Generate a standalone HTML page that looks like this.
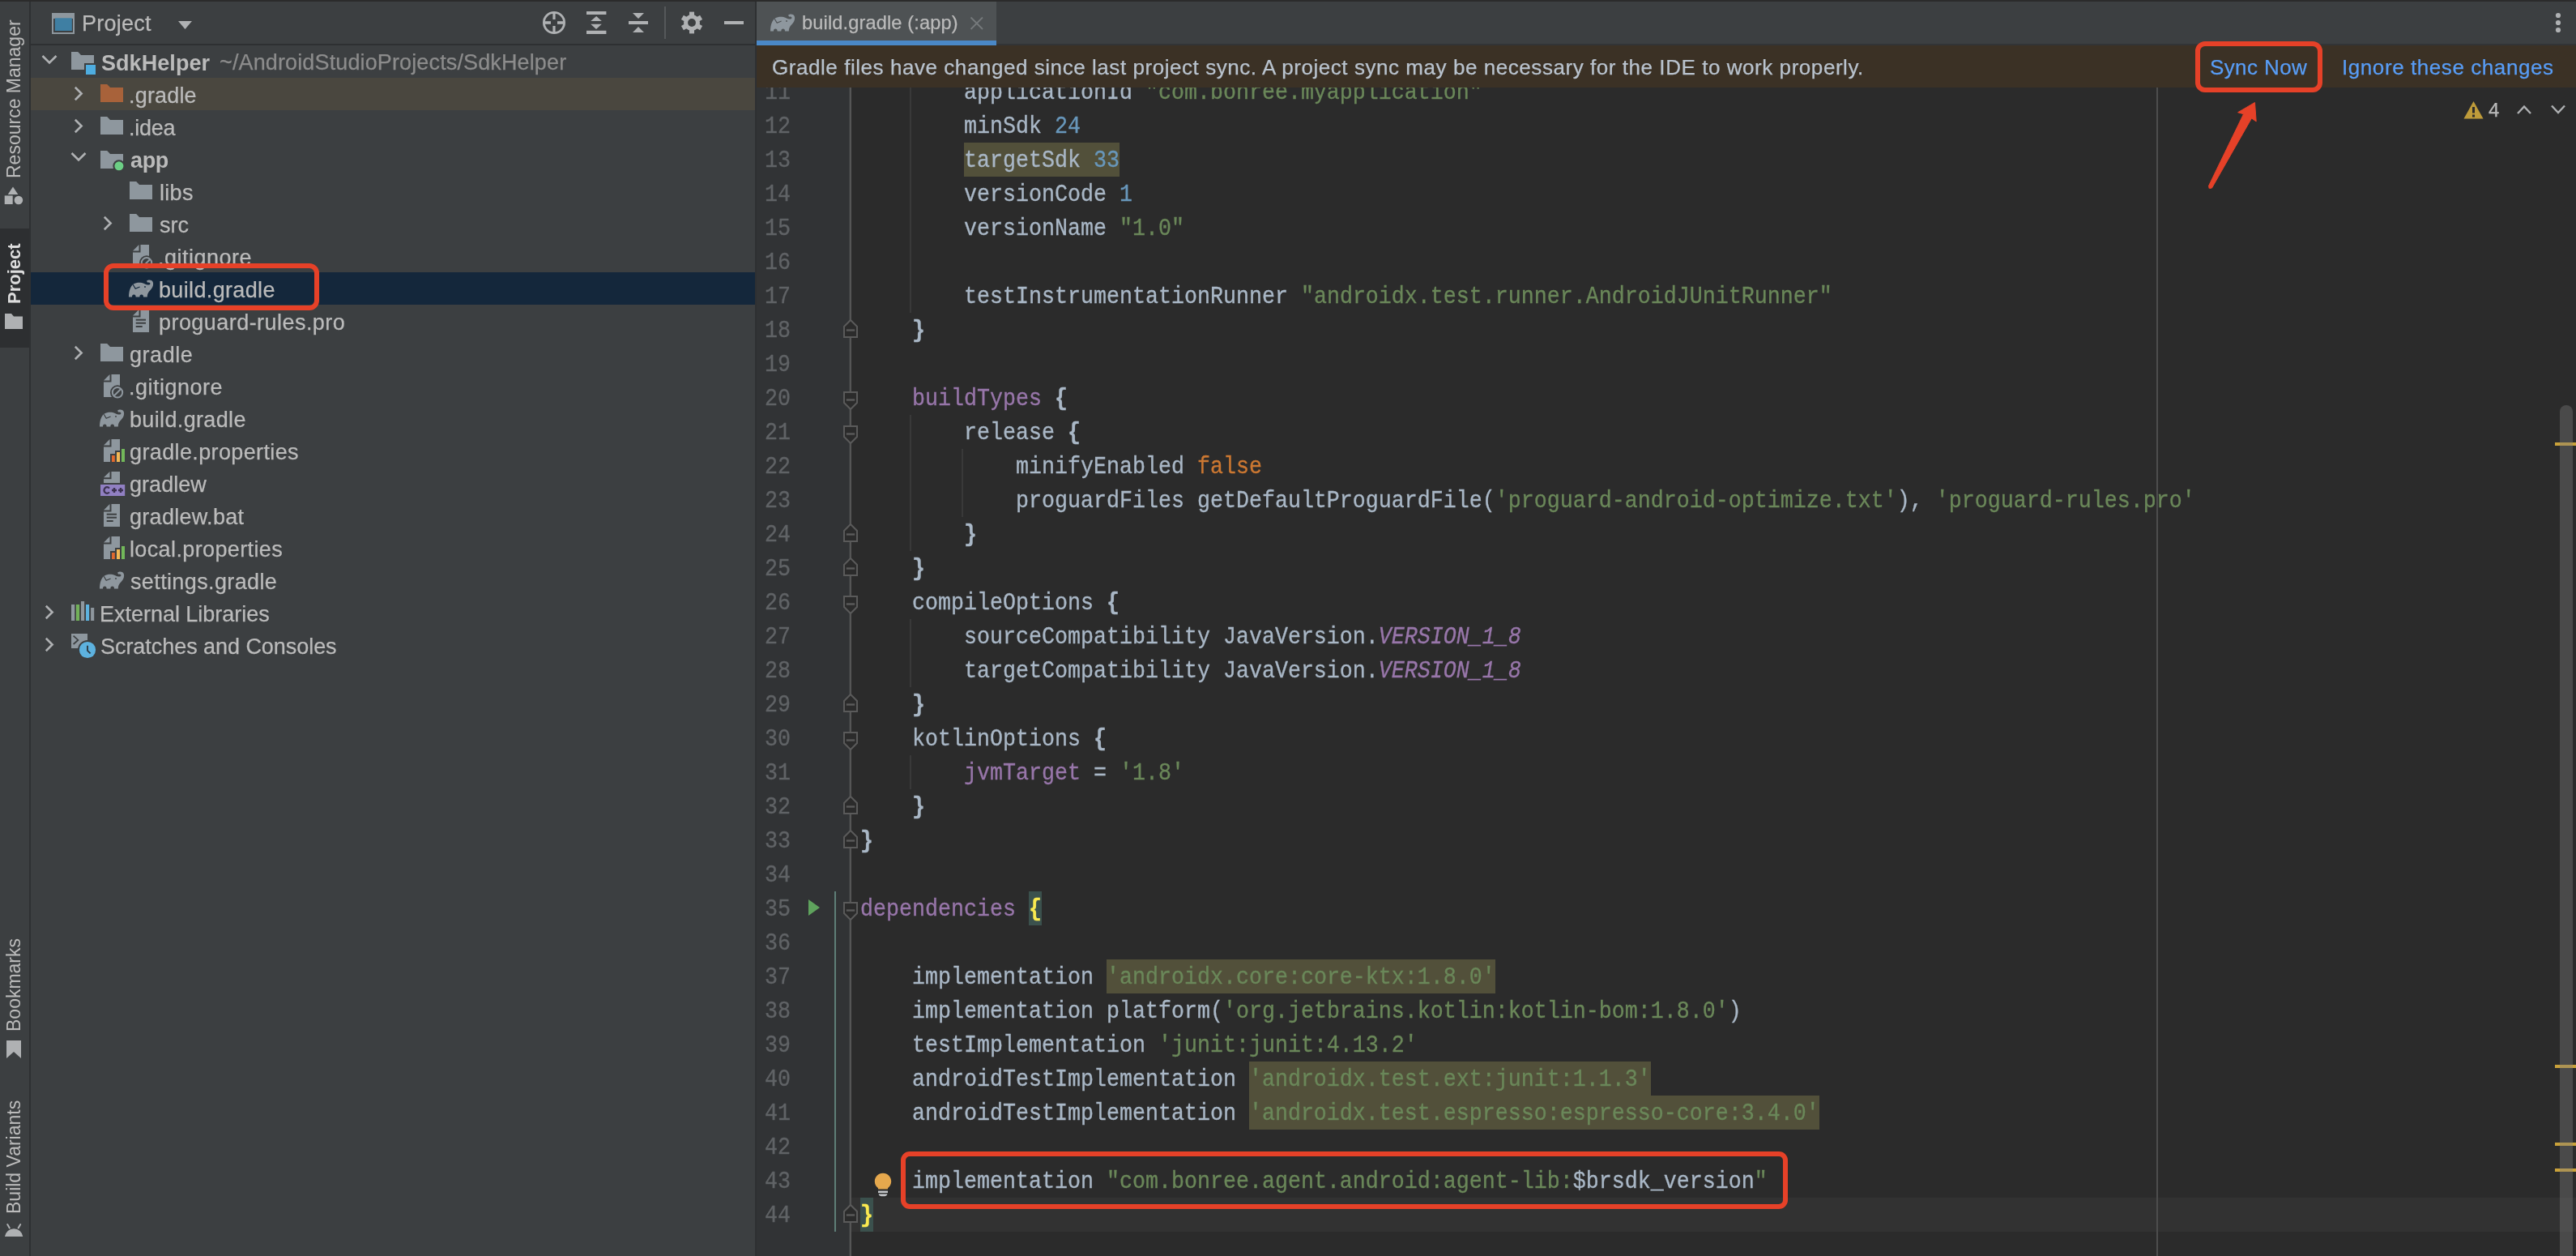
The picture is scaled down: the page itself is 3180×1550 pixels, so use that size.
<!DOCTYPE html>
<html><head><meta charset="utf-8">
<style>
*{margin:0;padding:0;box-sizing:border-box}
html,body{width:3180px;height:1550px;overflow:hidden;background:#3C3F41;font-family:"Liberation Sans",sans-serif}
.a{position:absolute}
.vt{position:absolute;transform-origin:0 0;transform:rotate(-90deg);white-space:nowrap;line-height:23px;height:23px;will-change:transform}
.tt{position:absolute;white-space:nowrap;font-size:27px;color:#BBBBBB;letter-spacing:0.4px;line-height:40px;will-change:transform;-webkit-text-stroke:0.25px}
.g{will-change:transform;-webkit-text-stroke:0.25px}
#gutter{left:934px;top:108px;width:114px;height:1442px;background:#313335;overflow:hidden}
#editor{left:1049px;top:108px;width:2131px;height:1442px;background:#2B2B2B;overflow:hidden}
.ln{position:absolute;left:0;width:42px;text-align:right;font-family:"Liberation Mono",monospace;font-size:26.67px;color:#606366;line-height:42px;height:42px;transform-origin:0 28px;transform:translateY(2.2px) scaleY(1.10);will-change:transform;-webkit-text-stroke:0.3px}
.cl{position:absolute;left:13px;white-space:pre;font-family:"Liberation Mono",monospace;font-size:26.67px;color:#A9B7C6;line-height:42px;height:42px;transform-origin:0 28px;transform:translateY(2.2px) scaleY(1.10);-webkit-text-stroke:0.3px;will-change:transform}
.k{color:#CC7832}.s{color:#6A8759}.n{color:#6897BB}.p{color:#9876AA}.i{font-style:italic}
.bm{color:#FAEA50;font-weight:bold}
.cl b{font-weight:bold}
</style></head><body>
<div class="a" style="left:0;top:0;width:3180px;height:2px;background:#2B2B2B"></div>
<div class="a" style="left:36px;top:2px;width:2px;height:1548px;background:#2E3032"></div>
<div class="a" style="left:38px;top:54px;width:894px;height:2px;background:#2E3032"></div>
<div class="a" style="left:932px;top:2px;width:2px;height:1548px;background:#2E3032"></div>
<div class="a" style="left:0;top:282px;width:36px;height:147px;background:#2D2F31"></div>
<div class="vt" style="left:6px;top:220px;color:#BBBBBB;font-weight:normal;font-size:23px">Resource Manager</div>
<div class="vt" style="left:6px;top:375px;color:#DDDDDD;font-weight:bold;font-size:22px">Project</div>
<div class="vt" style="left:6px;top:1273px;color:#BBBBBB;font-weight:normal;font-size:23px">Bookmarks</div>
<div class="vt" style="left:6px;top:1498px;color:#BBBBBB;font-weight:normal;font-size:23px">Build Variants</div>
<svg class="a" style="left:4px;top:228px" width="26" height="26" viewBox="0 0 26 26"><path d="M13 2.5 L19.3 12 H6.7Z" fill="#AFB1B3" transform="translate(-1,0)"/><rect x="1.7" y="13.4" width="10" height="10.6" fill="#AFB1B3"/><circle cx="18.9" cy="19" r="5.3" fill="#AFB1B3"/></svg>
<svg class="a" style="left:6px;top:386px" width="23" height="21" viewBox="0 0 23 21"><path d="M0 1 H8 L11 4.5 H22 V20 H0Z" fill="#AFB1B3"/></svg>
<svg class="a" style="left:8px;top:1284px" width="19" height="23" viewBox="0 0 19 23"><path d="M0 0 H18 V22 L9 14 L0 22Z" fill="#AFB1B3"/></svg>
<svg class="a" style="left:5px;top:1508px" width="25" height="20" viewBox="0 0 25 20"><path d="M1 18 A11.2 11.2 0 0 1 23.2 18 Z" fill="#AFB1B3"/><path d="M4.2 3 L6.8 7.5 M20.2 3 L17.6 7.5" stroke="#AFB1B3" stroke-width="2" stroke-linecap="round"/></svg>
<svg class="a" style="left:64px;top:16px" width="28" height="26" viewBox="0 0 28 26"><rect x="1" y="1" width="26" height="24" fill="none" stroke="#8E979E" stroke-width="2"/><rect x="1" y="1" width="26" height="6" fill="#8E979E"/><rect x="3.8" y="6.3" width="21" height="15.7" fill="#3F7FA3"/></svg>
<div class="a tt" style="left:101px;top:9px;line-height:40px;font-size:27px;letter-spacing:0.24px">Project</div>
<svg class="a" style="left:219px;top:25px" width="19" height="12" viewBox="0 0 19 12"><path d="M1 1 H18 L9.5 11Z" fill="#AFB1B3"/></svg>
<svg class="a" style="left:668px;top:12px" width="32" height="32" viewBox="0 0 32 32"><circle cx="16" cy="16" r="12.6" fill="none" stroke="#AFB1B3" stroke-width="2.8"/><rect x="14.4" y="4" width="3.2" height="8" fill="#AFB1B3"/><rect x="14.4" y="20" width="3.2" height="8" fill="#AFB1B3"/><rect x="4" y="14.2" width="8" height="3.6" fill="#AFB1B3"/><rect x="20" y="14.2" width="8" height="3.6" fill="#AFB1B3"/></svg>
<svg class="a" style="left:722px;top:12px" width="28" height="32" viewBox="0 0 28 32"><rect x="2" y="2" width="24.4" height="4" fill="#AFB1B3"/><rect x="2" y="25.8" width="24.4" height="4.2" fill="#AFB1B3"/><path d="M7.2 14 L14.2 8 L20.8 14Z M7.2 17.8 H20.8 L14 24Z" fill="#AFB1B3"/></svg>
<svg class="a" style="left:774px;top:12px" width="28" height="32" viewBox="0 0 28 32"><rect x="2" y="14" width="24" height="4" fill="#AFB1B3"/><path d="M7 3.9 H21 L14 11Z M14 21 L21 28 H7Z" fill="#AFB1B3"/></svg>
<div class="a" style="left:820px;top:8px;width:2px;height:40px;background:#55585A"></div>
<svg class="a" style="left:840px;top:14px" width="28" height="28" viewBox="0 0 28 28"><rect x="11" y="0.6" width="6" height="7" fill="#AFB1B3" transform="rotate(0 14 14)"/><rect x="11" y="0.6" width="6" height="7" fill="#AFB1B3" transform="rotate(60 14 14)"/><rect x="11" y="0.6" width="6" height="7" fill="#AFB1B3" transform="rotate(120 14 14)"/><rect x="11" y="0.6" width="6" height="7" fill="#AFB1B3" transform="rotate(180 14 14)"/><rect x="11" y="0.6" width="6" height="7" fill="#AFB1B3" transform="rotate(240 14 14)"/><rect x="11" y="0.6" width="6" height="7" fill="#AFB1B3" transform="rotate(300 14 14)"/><circle cx="14" cy="14" r="10" fill="#AFB1B3"/><circle cx="14" cy="14" r="4.9" fill="#3C3F41"/></svg>
<svg class="a" style="left:893px;top:25px" width="26" height="6" viewBox="0 0 26 6"><rect x="1" y="1" width="24" height="4" fill="#AFB1B3"/></svg>
<div class="a" style="left:38px;top:96px;width:894px;height:40px;background:#4A473F"></div>
<div class="a" style="left:38px;top:336px;width:894px;height:40px;background:#14273B"></div>
<svg class="a" style="left:50.5px;top:67px" width="20" height="14" viewBox="0 0 20 14"><path d="M1.5 2 L10 10.5 L18.5 2" stroke="#AFB1B3" stroke-width="2.6" fill="none"/></svg>
<svg class="a" style="left:88px;top:64px" width="32" height="30" viewBox="0 0 32 30"><path d="M0 0 H8.2 L12 4 H28 V22 H0Z" fill="#8E979E"/><rect x="16" y="14" width="16" height="16" fill="#3C3F41"/><rect x="18" y="16" width="12" height="12" fill="#4EADE0"/></svg>
<div class="a tt" style="left:124.8px;top:57.5px;font-weight:bold;-webkit-text-stroke:0;letter-spacing:0.06px">SdkHelper</div>
<div class="a tt" style="left:271px;top:57px;color:#8C8C8C;letter-spacing:0.13px">~/AndroidStudioProjects/SdkHelper</div>
<svg class="a" style="left:90.5px;top:106px" width="12" height="20" viewBox="0 0 12 20"><path d="M1.8 1.8 L9.6 9.5 L1.8 17.2" stroke="#AFB1B3" stroke-width="2.6" fill="none"/></svg>
<svg class="a" style="left:124px;top:104px" width="28" height="22" viewBox="0 0 28 22"><path d="M0 0 H8.2 L12 4 H28 V22 H0Z" fill="#A8623A"/></svg>
<div class="a tt" style="left:159.4px;top:97.5px;letter-spacing:0.18px">.gradle</div>
<svg class="a" style="left:90.5px;top:146px" width="12" height="20" viewBox="0 0 12 20"><path d="M1.8 1.8 L9.6 9.5 L1.8 17.2" stroke="#AFB1B3" stroke-width="2.6" fill="none"/></svg>
<svg class="a" style="left:124px;top:144px" width="28" height="22" viewBox="0 0 28 22"><path d="M0 0 H8.2 L12 4 H28 V22 H0Z" fill="#8E979E"/></svg>
<div class="a tt" style="left:159.2px;top:137.5px;letter-spacing:-0.28px">.idea</div>
<svg class="a" style="left:86.5px;top:187px" width="20" height="14" viewBox="0 0 20 14"><path d="M1.5 2 L10 10.5 L18.5 2" stroke="#AFB1B3" stroke-width="2.6" fill="none"/></svg>
<svg class="a" style="left:124px;top:186px" width="32" height="30" viewBox="0 0 32 30"><path d="M0 0 H8.2 L12 4 H28 V22 H0Z" fill="#8E979E"/><circle cx="22.9" cy="18.8" r="7.6" fill="#3C3F41"/><circle cx="22.9" cy="18.8" r="5.5" fill="#6CCF85"/></svg>
<div class="a tt" style="left:161px;top:177.5px;font-weight:bold;-webkit-text-stroke:0;letter-spacing:-0.35px">app</div>
<svg class="a" style="left:160px;top:224px" width="28" height="22" viewBox="0 0 28 22"><path d="M0 0 H8.2 L12 4 H28 V22 H0Z" fill="#8E979E"/></svg>
<div class="a tt" style="left:196.8px;top:217.5px;letter-spacing:0.3px">libs</div>
<svg class="a" style="left:126.5px;top:266px" width="12" height="20" viewBox="0 0 12 20"><path d="M1.8 1.8 L9.6 9.5 L1.8 17.2" stroke="#AFB1B3" stroke-width="2.6" fill="none"/></svg>
<svg class="a" style="left:160px;top:264px" width="28" height="22" viewBox="0 0 28 22"><path d="M0 0 H8.2 L12 4 H28 V22 H0Z" fill="#8E979E"/></svg>
<div class="a tt" style="left:197px;top:257.5px;letter-spacing:0.05px">src</div>
<svg class="a" style="left:164px;top:302px" width="30" height="32" viewBox="0 0 30 32"><path d="M9.5 0 H20 V28 H0 V9.5 H9.5Z M0 7.5 L7.5 0 V7.5Z" fill="#8E979E"/><circle cx="17" cy="22.3" r="9" fill="#3C3F41"/><circle cx="17" cy="22.3" r="6.2" fill="none" stroke="#8E979E" stroke-width="2"/><path d="M13 26.3 L21 18.3" stroke="#8E979E" stroke-width="2"/></svg>
<div class="a tt" style="left:194.8px;top:297.5px;letter-spacing:0.49px">.gitignore</div>
<svg class="a" style="left:159px;top:345px" width="31" height="23" viewBox="0 0 31 23"><path d="M0 21.5 C0 14 2 8 6 5.5 C9 3.5 15 3 19 5 C21 6 22.5 6.6 24.5 6.6 C26.2 6.6 26.8 5.4 26.2 4.2 C25.6 3.2 24.2 3.2 23.2 3.8 L22 1.8 C24 -0.2 28.2 -0.2 29.6 2.8 C31 6.2 29.4 10.2 26.6 13 C23.8 15.8 22.8 18 22.8 21.5 L18 21.5 C18 19.3 17.2 18.6 15.7 18.6 C14.2 18.6 13.4 19.3 13.4 21.5 L8.6 21.5 C8.6 19.3 7.8 18.6 6.3 18.6 C4.8 18.6 4 19.3 4 21.5Z" fill="#8E979E"/><path d="M5.2 6.2 L8.2 11.3 L13.6 9" stroke="#14273B" stroke-width="1.2" fill="none"/><circle cx="20" cy="9" r="0.9" fill="#14273B"/></svg>
<div class="a tt" style="left:195.8px;top:337.5px;letter-spacing:0.35px">build.gradle</div>
<svg class="a" style="left:164px;top:382px" width="20" height="29" viewBox="0 0 20 29"><path d="M9.5 0 H20 V28 H0 V9.5 H9.5Z M0 7.5 L7.5 0 V7.5Z" fill="#8E979E"/><rect x="3.7" y="11.7" width="12.3" height="2" fill="#3C3F41"/><rect x="3.7" y="15.7" width="12.3" height="2" fill="#3C3F41"/><rect x="3.7" y="20" width="8" height="2" fill="#3C3F41"/></svg>
<div class="a tt" style="left:195.8px;top:377.5px;letter-spacing:0.45px">proguard-rules.pro</div>
<svg class="a" style="left:90.5px;top:426px" width="12" height="20" viewBox="0 0 12 20"><path d="M1.8 1.8 L9.6 9.5 L1.8 17.2" stroke="#AFB1B3" stroke-width="2.6" fill="none"/></svg>
<svg class="a" style="left:124px;top:424px" width="28" height="22" viewBox="0 0 28 22"><path d="M0 0 H8.2 L12 4 H28 V22 H0Z" fill="#8E979E"/></svg>
<div class="a tt" style="left:159.5px;top:417.5px;letter-spacing:0.55px">gradle</div>
<svg class="a" style="left:128px;top:462px" width="30" height="32" viewBox="0 0 30 32"><path d="M9.5 0 H20 V28 H0 V9.5 H9.5Z M0 7.5 L7.5 0 V7.5Z" fill="#8E979E"/><circle cx="17" cy="22.3" r="9" fill="#3C3F41"/><circle cx="17" cy="22.3" r="6.2" fill="none" stroke="#8E979E" stroke-width="2"/><path d="M13 26.3 L21 18.3" stroke="#8E979E" stroke-width="2"/></svg>
<div class="a tt" style="left:158.6px;top:457.5px;letter-spacing:0.49px">.gitignore</div>
<svg class="a" style="left:123px;top:505px" width="31" height="23" viewBox="0 0 31 23"><path d="M0 21.5 C0 14 2 8 6 5.5 C9 3.5 15 3 19 5 C21 6 22.5 6.6 24.5 6.6 C26.2 6.6 26.8 5.4 26.2 4.2 C25.6 3.2 24.2 3.2 23.2 3.8 L22 1.8 C24 -0.2 28.2 -0.2 29.6 2.8 C31 6.2 29.4 10.2 26.6 13 C23.8 15.8 22.8 18 22.8 21.5 L18 21.5 C18 19.3 17.2 18.6 15.7 18.6 C14.2 18.6 13.4 19.3 13.4 21.5 L8.6 21.5 C8.6 19.3 7.8 18.6 6.3 18.6 C4.8 18.6 4 19.3 4 21.5Z" fill="#8E979E"/><path d="M5.2 6.2 L8.2 11.3 L13.6 9" stroke="#3C3F41" stroke-width="1.2" fill="none"/><circle cx="20" cy="9" r="0.9" fill="#3C3F41"/></svg>
<div class="a tt" style="left:159.6px;top:497.5px;letter-spacing:0.35px">build.gradle</div>
<svg class="a" style="left:128px;top:542px" width="28" height="30" viewBox="0 0 28 30"><path d="M9.5 0 H20 V28 H0 V9.5 H9.5Z M0 7.5 L7.5 0 V7.5Z" fill="#8E979E"/><path d="M8 18 H14 V14 H20 V10 H28 V30 H8Z" fill="#3C3F41"/><rect x="10" y="20" width="3.8" height="8" fill="#E0692F"/><rect x="16" y="16" width="4" height="12" fill="#F2B856"/><rect x="22" y="12" width="4" height="16" fill="#72B85A"/></svg>
<div class="a tt" style="left:159.6px;top:537.5px;letter-spacing:0.37px">gradle.properties</div>
<svg class="a" style="left:124px;top:581px" width="32" height="32" viewBox="0 0 32 32"><path d="M13.5 1 H24 V15 H4 V10.3 H13.5Z M4 8.3 L11.5 1 V8.3Z" fill="#8E979E"/><rect x="0" y="17" width="30.2" height="14" fill="#9180C3"/><path d="M10.9 21.6 A3.6 3.8 0 1 0 10.9 26.4" stroke="#3C3250" stroke-width="2.3" fill="none"/><path d="M14 24 H20 M17 21 V27 M22 24 H28 M25 21 V27" stroke="#3C3250" stroke-width="2.4"/></svg>
<div class="a tt" style="left:159.6px;top:577.5px;letter-spacing:0.04px">gradlew</div>
<svg class="a" style="left:128px;top:622px" width="20" height="29" viewBox="0 0 20 29"><path d="M9.5 0 H20 V28 H0 V9.5 H9.5Z M0 7.5 L7.5 0 V7.5Z" fill="#8E979E"/><rect x="3.7" y="11.7" width="12.3" height="2" fill="#3C3F41"/><rect x="3.7" y="15.7" width="12.3" height="2" fill="#3C3F41"/><rect x="3.7" y="20" width="8" height="2" fill="#3C3F41"/></svg>
<div class="a tt" style="left:159.6px;top:617.5px;letter-spacing:0.29px">gradlew.bat</div>
<svg class="a" style="left:128px;top:662px" width="28" height="30" viewBox="0 0 28 30"><path d="M9.5 0 H20 V28 H0 V9.5 H9.5Z M0 7.5 L7.5 0 V7.5Z" fill="#8E979E"/><path d="M8 18 H14 V14 H20 V10 H28 V30 H8Z" fill="#3C3F41"/><rect x="10" y="20" width="3.8" height="8" fill="#E0692F"/><rect x="16" y="16" width="4" height="12" fill="#F2B856"/><rect x="22" y="12" width="4" height="16" fill="#72B85A"/></svg>
<div class="a tt" style="left:159.6px;top:657.5px;letter-spacing:0.37px">local.properties</div>
<svg class="a" style="left:123px;top:705px" width="31" height="23" viewBox="0 0 31 23"><path d="M0 21.5 C0 14 2 8 6 5.5 C9 3.5 15 3 19 5 C21 6 22.5 6.6 24.5 6.6 C26.2 6.6 26.8 5.4 26.2 4.2 C25.6 3.2 24.2 3.2 23.2 3.8 L22 1.8 C24 -0.2 28.2 -0.2 29.6 2.8 C31 6.2 29.4 10.2 26.6 13 C23.8 15.8 22.8 18 22.8 21.5 L18 21.5 C18 19.3 17.2 18.6 15.7 18.6 C14.2 18.6 13.4 19.3 13.4 21.5 L8.6 21.5 C8.6 19.3 7.8 18.6 6.3 18.6 C4.8 18.6 4 19.3 4 21.5Z" fill="#8E979E"/><path d="M5.2 6.2 L8.2 11.3 L13.6 9" stroke="#3C3F41" stroke-width="1.2" fill="none"/><circle cx="20" cy="9" r="0.9" fill="#3C3F41"/></svg>
<div class="a tt" style="left:160.6px;top:697.5px;letter-spacing:0.37px">settings.gradle</div>
<svg class="a" style="left:54.5px;top:746px" width="12" height="20" viewBox="0 0 12 20"><path d="M1.8 1.8 L9.6 9.5 L1.8 17.2" stroke="#AFB1B3" stroke-width="2.6" fill="none"/></svg>
<svg class="a" style="left:88px;top:742px" width="29" height="24" viewBox="0 0 29 24"><rect x="0" y="4" width="4.2" height="20" fill="#8E979E"/><rect x="5.9" y="4" width="4.2" height="20" fill="#72B05A"/><rect x="12" y="0" width="4.1" height="24" fill="#8E979E"/><rect x="18" y="4" width="4.1" height="20" fill="#5DB2DF"/><rect x="24.1" y="8" width="4.1" height="16" fill="#8E979E"/></svg>
<div class="a tt" style="left:123.2px;top:737.5px;letter-spacing:-0.02px">External Libraries</div>
<svg class="a" style="left:54.5px;top:786px" width="12" height="20" viewBox="0 0 12 20"><path d="M1.8 1.8 L9.6 9.5 L1.8 17.2" stroke="#AFB1B3" stroke-width="2.6" fill="none"/></svg>
<svg class="a" style="left:88px;top:782px" width="32" height="32" viewBox="0 0 32 32"><rect x="0" y="0" width="20" height="18" fill="#8E979E"/><path d="M2.6 2.6 L8.4 7.9 L2.6 13" stroke="#3C3F41" stroke-width="1.7" fill="none"/><circle cx="20" cy="20" r="12" fill="#3C3F41"/><circle cx="20" cy="20" r="10.1" fill="#5DB2DF"/><path d="M20 14.8 V20.8 L23.6 24.4" stroke="#2E3A44" stroke-width="1.9" fill="none"/></svg>
<div class="a tt" style="left:124.2px;top:777.5px;letter-spacing:-0.05px">Scratches and Consoles</div>
<div class="a" style="left:1230px;top:54px;width:1950px;height:2px;background:#323436"></div>
<div class="a" style="left:934px;top:2px;width:296px;height:48px;background:#4E5254"></div>
<div class="a" style="left:934px;top:50px;width:296px;height:6px;background:#4A88C7"></div>
<svg class="a" style="left:951px;top:17px" width="31" height="23" viewBox="0 0 31 23"><path d="M0 21.5 C0 14 2 8 6 5.5 C9 3.5 15 3 19 5 C21 6 22.5 6.6 24.5 6.6 C26.2 6.6 26.8 5.4 26.2 4.2 C25.6 3.2 24.2 3.2 23.2 3.8 L22 1.8 C24 -0.2 28.2 -0.2 29.6 2.8 C31 6.2 29.4 10.2 26.6 13 C23.8 15.8 22.8 18 22.8 21.5 L18 21.5 C18 19.3 17.2 18.6 15.7 18.6 C14.2 18.6 13.4 19.3 13.4 21.5 L8.6 21.5 C8.6 19.3 7.8 18.6 6.3 18.6 C4.8 18.6 4 19.3 4 21.5Z" fill="#8E979E"/><path d="M5.2 6.2 L8.2 11.3 L13.6 9" stroke="#4E5254" stroke-width="1.2" fill="none"/><circle cx="20" cy="9" r="0.9" fill="#4E5254"/></svg>
<div class="a g" style="left:990px;top:9.5px;white-space:nowrap;font-size:23.6px;line-height:36px;color:#BBBBBB;letter-spacing:0.13px">build.gradle (:app)</div>
<svg class="a" style="left:1197px;top:20px" width="18" height="18" viewBox="0 0 18 18"><path d="M1.5 1.5 L16 16 M16 1.5 L1.5 16" stroke="#75797B" stroke-width="1.8"/></svg>
<svg class="a" style="left:3150px;top:14px" width="16" height="30" viewBox="0 0 16 30"><circle cx="8" cy="5" r="3.1" fill="#AFB1B3"/><circle cx="8" cy="14" r="3.1" fill="#AFB1B3"/><circle cx="8" cy="23" r="3.1" fill="#AFB1B3"/></svg>
<div class="a" style="left:934px;top:56px;width:2246px;height:52px;background:#3B3125"></div>
<div class="a g" style="left:953px;top:63px;white-space:nowrap;font-size:26px;line-height:40px;color:#B9C3CE;letter-spacing:0.555px">Gradle files have changed since last project sync. A project sync may be necessary for the IDE to work properly.</div>
<div class="a g" style="left:2728px;top:63px;white-space:nowrap;font-size:26px;line-height:40px;color:#589DF6;letter-spacing:0.39px">Sync Now</div>
<div class="a g" style="left:2890.7px;top:63px;white-space:nowrap;font-size:26px;line-height:40px;color:#589DF6;letter-spacing:0.575px">Ignore these changes</div>
<div id="editor" class="a"><div class="a" style="left:0;top:1370px;width:2131px;height:42px;background:#323232"></div><div class="a" style="left:74px;top:0px;width:2px;height:278px;background:#393939"></div><div class="a" style="left:74px;top:404px;width:2px;height:168px;background:#393939"></div><div class="a" style="left:138px;top:446px;width:2px;height:84px;background:#393939"></div><div class="a" style="left:74px;top:656px;width:2px;height:84px;background:#393939"></div><div class="a" style="left:74px;top:824px;width:2px;height:42px;background:#393939"></div><div class="a" style="left:141px;top:68px;width:192px;height:42px;background:#52503A"></div><div class="a" style="left:317px;top:1076px;width:480px;height:42px;background:#52503A"></div><div class="a" style="left:493px;top:1202px;width:496px;height:42px;background:#52503A"></div><div class="a" style="left:493px;top:1244px;width:704px;height:42px;background:#52503A"></div><div class="a" style="left:221px;top:992px;width:16px;height:42px;background:#3B514D"></div><div class="a" style="left:13px;top:1370px;width:16px;height:42px;background:#3B514D"></div><div class="cl" style="top:-16px">        applicationId <span class="s">"com.bonree.myapplication"</span></div><div class="cl" style="top:26px">        minSdk <span class="n">24</span></div><div class="cl" style="top:68px">        targetSdk <span class="n">33</span></div><div class="cl" style="top:110px">        versionCode <span class="n">1</span></div><div class="cl" style="top:152px">        versionName <span class="s">"1.0"</span></div><div class="cl" style="top:194px"></div><div class="cl" style="top:236px">        testInstrumentationRunner <span class="s">"androidx.test.runner.AndroidJUnitRunner"</span></div><div class="cl" style="top:278px">    <b>}</b></div><div class="cl" style="top:320px"></div><div class="cl" style="top:362px">    <span class="p">buildTypes</span> <b>{</b></div><div class="cl" style="top:404px">        release <b>{</b></div><div class="cl" style="top:446px">            minifyEnabled <span class="k">false</span></div><div class="cl" style="top:488px">            proguardFiles getDefaultProguardFile(<span class="s">'proguard-android-optimize.txt'</span>), <span class="s">'proguard-rules.pro'</span></div><div class="cl" style="top:530px">        <b>}</b></div><div class="cl" style="top:572px">    <b>}</b></div><div class="cl" style="top:614px">    compileOptions <b>{</b></div><div class="cl" style="top:656px">        sourceCompatibility JavaVersion.<span class="p i">VERSION_1_8</span></div><div class="cl" style="top:698px">        targetCompatibility JavaVersion.<span class="p i">VERSION_1_8</span></div><div class="cl" style="top:740px">    <b>}</b></div><div class="cl" style="top:782px">    kotlinOptions <b>{</b></div><div class="cl" style="top:824px">        <span class="p">jvmTarget</span> = <span class="s">'1.8'</span></div><div class="cl" style="top:866px">    <b>}</b></div><div class="cl" style="top:908px"><b>}</b></div><div class="cl" style="top:950px"></div><div class="cl" style="top:992px"><span class="p">dependencies</span> <span class="bm">{</span></div><div class="cl" style="top:1034px"></div><div class="cl" style="top:1076px">    implementation <span class="s">'androidx.core:core-ktx:1.8.0'</span></div><div class="cl" style="top:1118px">    implementation platform(<span class="s">'org.jetbrains.kotlin:kotlin-bom:1.8.0'</span>)</div><div class="cl" style="top:1160px">    testImplementation <span class="s">'junit:junit:4.13.2'</span></div><div class="cl" style="top:1202px">    androidTestImplementation <span class="s">'androidx.test.ext:junit:1.1.3'</span></div><div class="cl" style="top:1244px">    androidTestImplementation <span class="s">'androidx.test.espresso:espresso-core:3.4.0'</span></div><div class="cl" style="top:1286px"></div><div class="cl" style="top:1328px">    implementation <span class="s">"com.bonree.agent.android:agent-lib:</span>$brsdk_version<span class="s">"</span></div><div class="cl" style="top:1370px"><span class="bm">}</span></div><div class="a" style="left:1613px;top:0;width:2px;height:1442px;background:#4D4D4D"></div><div class="a" style="left:2105px;top:438px;width:26px;height:4px;background:#C9A13A"></div><div class="a" style="left:2105px;top:1206px;width:26px;height:4px;background:#C9A13A"></div><div class="a" style="left:2105px;top:1302px;width:26px;height:4px;background:#C9A13A"></div><div class="a" style="left:2105px;top:1334px;width:26px;height:4px;background:#C9A13A"></div><div class="a" style="left:2111px;top:392px;width:16px;height:1100px;background:rgba(128,128,128,0.37);border-radius:8px"></div></div>
<div id="gutter" class="a"><div class="ln" style="top:-16px">11</div><div class="ln" style="top:26px">12</div><div class="ln" style="top:68px">13</div><div class="ln" style="top:110px">14</div><div class="ln" style="top:152px">15</div><div class="ln" style="top:194px">16</div><div class="ln" style="top:236px">17</div><div class="ln" style="top:278px">18</div><div class="ln" style="top:320px">19</div><div class="ln" style="top:362px">20</div><div class="ln" style="top:404px">21</div><div class="ln" style="top:446px">22</div><div class="ln" style="top:488px">23</div><div class="ln" style="top:530px">24</div><div class="ln" style="top:572px">25</div><div class="ln" style="top:614px">26</div><div class="ln" style="top:656px">27</div><div class="ln" style="top:698px">28</div><div class="ln" style="top:740px">29</div><div class="ln" style="top:782px">30</div><div class="ln" style="top:824px">31</div><div class="ln" style="top:866px">32</div><div class="ln" style="top:908px">33</div><div class="ln" style="top:950px">34</div><div class="ln" style="top:992px">35</div><div class="ln" style="top:1034px">36</div><div class="ln" style="top:1076px">37</div><div class="ln" style="top:1118px">38</div><div class="ln" style="top:1160px">39</div><div class="ln" style="top:1202px">40</div><div class="ln" style="top:1244px">41</div><div class="ln" style="top:1286px">42</div><div class="ln" style="top:1328px">43</div><div class="ln" style="top:1370px">44</div></div>
<div class="a" style="left:1049px;top:108px;width:2px;height:1442px;background:#555555"></div>
<div class="a" style="left:1030px;top:1100px;width:2px;height:420px;background:#5E7E77"></div>
<svg class="a" style="left:1041px;top:483px" width="18" height="24" viewBox="0 0 18 24"><path d="M1 1 H17 V14 L9 22 L1 14Z" fill="#2B2B2B" stroke="#5A5A5A" stroke-width="2"/><rect x="3.8" y="9.3" width="10.4" height="2.4" fill="#5A5A5A"/></svg>
<svg class="a" style="left:1041px;top:525px" width="18" height="24" viewBox="0 0 18 24"><path d="M1 1 H17 V14 L9 22 L1 14Z" fill="#2B2B2B" stroke="#5A5A5A" stroke-width="2"/><rect x="3.8" y="9.3" width="10.4" height="2.4" fill="#5A5A5A"/></svg>
<svg class="a" style="left:1041px;top:735px" width="18" height="24" viewBox="0 0 18 24"><path d="M1 1 H17 V14 L9 22 L1 14Z" fill="#2B2B2B" stroke="#5A5A5A" stroke-width="2"/><rect x="3.8" y="9.3" width="10.4" height="2.4" fill="#5A5A5A"/></svg>
<svg class="a" style="left:1041px;top:903px" width="18" height="24" viewBox="0 0 18 24"><path d="M1 1 H17 V14 L9 22 L1 14Z" fill="#2B2B2B" stroke="#5A5A5A" stroke-width="2"/><rect x="3.8" y="9.3" width="10.4" height="2.4" fill="#5A5A5A"/></svg>
<svg class="a" style="left:1041px;top:1113px" width="18" height="24" viewBox="0 0 18 24"><path d="M1 1 H17 V14 L9 22 L1 14Z" fill="#2B2B2B" stroke="#5A5A5A" stroke-width="2"/><rect x="3.8" y="9.3" width="10.4" height="2.4" fill="#5A5A5A"/></svg>
<svg class="a" style="left:1041px;top:393.3px" width="18" height="25" viewBox="0 0 18 25"><path d="M1 23 H17 V10 L9 2 L1 10Z" fill="#2B2B2B" stroke="#5A5A5A" stroke-width="2"/><rect x="3.8" y="13.3" width="10.4" height="2.4" fill="#5A5A5A"/></svg>
<svg class="a" style="left:1041px;top:645.3px" width="18" height="25" viewBox="0 0 18 25"><path d="M1 23 H17 V10 L9 2 L1 10Z" fill="#2B2B2B" stroke="#5A5A5A" stroke-width="2"/><rect x="3.8" y="13.3" width="10.4" height="2.4" fill="#5A5A5A"/></svg>
<svg class="a" style="left:1041px;top:687.3px" width="18" height="25" viewBox="0 0 18 25"><path d="M1 23 H17 V10 L9 2 L1 10Z" fill="#2B2B2B" stroke="#5A5A5A" stroke-width="2"/><rect x="3.8" y="13.3" width="10.4" height="2.4" fill="#5A5A5A"/></svg>
<svg class="a" style="left:1041px;top:855.3px" width="18" height="25" viewBox="0 0 18 25"><path d="M1 23 H17 V10 L9 2 L1 10Z" fill="#2B2B2B" stroke="#5A5A5A" stroke-width="2"/><rect x="3.8" y="13.3" width="10.4" height="2.4" fill="#5A5A5A"/></svg>
<svg class="a" style="left:1041px;top:981.3px" width="18" height="25" viewBox="0 0 18 25"><path d="M1 23 H17 V10 L9 2 L1 10Z" fill="#2B2B2B" stroke="#5A5A5A" stroke-width="2"/><rect x="3.8" y="13.3" width="10.4" height="2.4" fill="#5A5A5A"/></svg>
<svg class="a" style="left:1041px;top:1023.3px" width="18" height="25" viewBox="0 0 18 25"><path d="M1 23 H17 V10 L9 2 L1 10Z" fill="#2B2B2B" stroke="#5A5A5A" stroke-width="2"/><rect x="3.8" y="13.3" width="10.4" height="2.4" fill="#5A5A5A"/></svg>
<svg class="a" style="left:1041px;top:1485.3px" width="18" height="25" viewBox="0 0 18 25"><path d="M1 23 H17 V10 L9 2 L1 10Z" fill="#2B2B2B" stroke="#5A5A5A" stroke-width="2"/><rect x="3.8" y="13.3" width="10.4" height="2.4" fill="#5A5A5A"/></svg>
<svg class="a" style="left:997px;top:1109px" width="16" height="22" viewBox="0 0 16 22"><path d="M1 1 L15 11 L1 21Z" fill="#5FA35D"/></svg>
<svg class="a" style="left:1076px;top:1444px" width="28" height="34" viewBox="0 0 28 34"><path d="M14 3.8 C19.8 3.8 24.2 8.2 24.2 14 C24.2 17.6 22.4 20.2 20.2 22 L19.8 23.6 H8.2 L7.8 22 C5.6 20.2 3.8 17.6 3.8 14 C3.8 8.2 8.2 3.8 14 3.8Z" fill="#E5A84D"/><rect x="8" y="25.6" width="12" height="2.5" fill="#C5C8CB"/><path d="M8.6 29.6 H19.4 C19 31.4 17.6 32.2 16 32.2 H12 C10.4 32.2 9 31.4 8.6 29.6Z" fill="#C5C8CB"/></svg>
<svg class="a" style="left:3041px;top:124px" width="26" height="24" viewBox="0 0 26 24"><path d="M12.5 1 L24.5 22.5 H0.5Z" fill="#BE9B3A"/><rect x="11" y="8" width="3" height="7.5" fill="#2B2B2B"/><rect x="11" y="17.5" width="3" height="3" fill="#2B2B2B"/></svg>
<div class="a g" style="left:3072px;top:116px;white-space:nowrap;font-size:24px;line-height:40px;color:#BBBBBB">4</div>
<svg class="a" style="left:3106px;top:128px" width="20" height="14" viewBox="0 0 20 14"><path d="M2 12 L10 3.5 L18 12" stroke="#AFB1B3" stroke-width="2.4" fill="none"/></svg>
<svg class="a" style="left:3148px;top:128px" width="20" height="14" viewBox="0 0 20 14"><path d="M2 2.5 L10 11 L18 2.5" stroke="#AFB1B3" stroke-width="2.4" fill="none"/></svg>
<div class="a" style="left:128px;top:324.5px;width:266px;height:58.5px;border:6.4px solid #E64128;border-radius:12px"></div>
<div class="a" style="left:2710px;top:51px;width:157px;height:63px;border:6px solid #E64128;border-radius:12px"></div>
<div class="a" style="left:1112px;top:1421px;width:1095px;height:71px;border:6.2px solid #E64128;border-radius:11px"></div>
<svg class="a" style="left:2700px;top:100px" width="100" height="150" viewBox="0 0 100 150"><path d="M26.5 129.5 L69.6 40.7 L62.6 38.7 L83.5 26.5 L85.2 49.9 L79.5 45.9 L30.5 132 Z" fill="#E64128" stroke="#E64128" stroke-width="1" stroke-linejoin="round"/><circle cx="28.4" cy="130.8" r="2.2" fill="#E64128"/></svg>
</body></html>
